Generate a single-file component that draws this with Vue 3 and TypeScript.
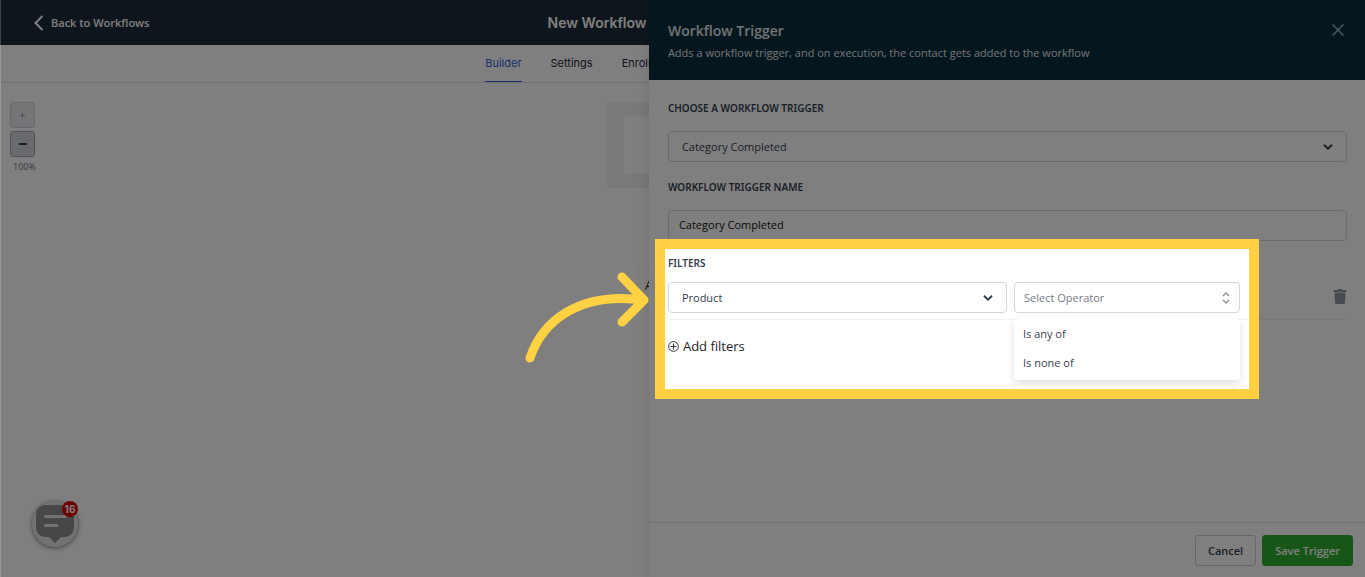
<script setup lang="ts">
import { ref } from 'vue'

const trigger = ref('Category Completed')
const triggerName = ref('Category Completed')
const filterField = ref('Product')
const operator = ref('')
const operators: string[] = ['Is any of', 'Is none of']
const tabs: string[] = ['Builder', 'Settings', 'Enrollment']
const activeTab = ref('Builder')
</script>

<template>
  <div class="page">
    <header class="topbar">
      <a class="back" href="#">
        <svg width="10" height="16" viewBox="0 0 10 16" fill="none" stroke="currentColor" stroke-width="2" aria-hidden="true">
          <path d="M8.5 1 1.5 8l7 7" />
        </svg>
        Back to Workflows
      </a>
      <h1 class="title">New Workflow</h1>
    </header>

    <nav class="tabs">
      <a v-for="tab in tabs" :key="tab" href="#" class="tab" :class="{ active: tab === activeTab }" @click.prevent="activeTab = tab">{{ tab }}</a>
    </nav>

    <main class="canvas">
      <div class="zoom">
        <button class="zoom-btn faded" type="button" aria-label="Zoom in" disabled>
          <svg width="7" height="7" viewBox="0 0 7 7" stroke="currentColor" fill="none"><path d="M3.5 1v5M1 3.5h5" /></svg>
        </button>
        <button class="zoom-btn" type="button" aria-label="Zoom out">
          <svg width="8" height="4" viewBox="0 0 8 4" stroke="currentColor" stroke-width="2" fill="none"><path d="M0 2h8" /></svg>
        </button>
        <span class="zoom-level">100%</span>
      </div>
      <div class="flow">
        <div class="trigger-node"><div class="trigger-inner"></div></div>
        <div class="step-node">Add</div>
      </div>
      <button class="chat" type="button" aria-label="Open chat">
        <svg width="38" height="38" viewBox="0 0 38 38" aria-hidden="true">
          <path d="M9 0h20a9 9 0 0 1 9 9v14a9 9 0 0 1-9 9h-4l-6 6-6-6H9a9 9 0 0 1-9-9V9a9 9 0 0 1 9-9z" fill="#8f8f8f" />
          <path d="M9.500 11.500h20M9.500 20.500h11.500" stroke="#e6e6e6" stroke-width="3" stroke-linecap="round" />
        </svg>
        <span class="badge">16</span>
      </button>
    </main>

    <aside class="drawer">
      <header class="drawer-head">
        <div>
          <h2>Workflow Trigger</h2>
          <p>Adds a workflow trigger, and on execution, the contact gets added to the workflow</p>
        </div>
        <button class="close" type="button" aria-label="Close">
          <svg width="12" height="12" viewBox="0 0 12 12" stroke="currentColor" stroke-width="1.500" fill="none"><path d="M.5.5l11 11M11.500.5l-11 11" /></svg>
        </button>
      </header>

      <div class="drawer-body">
        <div class="field">
          <label for="trigger">CHOOSE A WORKFLOW TRIGGER</label>
          <div class="control">
            <select id="trigger" v-model="trigger"><option>Category Completed</option></select>
            <svg class="chevron" width="10" height="6" viewBox="0 0 10 6" fill="none" stroke="currentColor" stroke-width="2"><path d="M1 .7 5 4.600 9 .7" /></svg>
          </div>
        </div>

        <div class="field">
          <label for="trigger-name">WORKFLOW TRIGGER NAME</label>
          <input id="trigger-name" v-model="triggerName" type="text" />
        </div>

        <section class="filters">
          <div class="filter-card">
            <label for="filter-field">FILTERS</label>
            <div class="filter-row">
              <div class="control wide">
                <select id="filter-field" v-model="filterField"><option>Product</option></select>
                <svg class="chevron" width="10" height="6" viewBox="0 0 10 6" fill="none" stroke="currentColor" stroke-width="2"><path d="M1 .7 5 4.600 9 .7" /></svg>
              </div>
              <div class="control narrow">
                <select id="operator" v-model="operator" class="placeholder" aria-label="Operator">
                  <option value="">Select Operator</option>
                  <option v-for="name in operators" :key="name">{{ name }}</option>
                </select>
                <svg class="updown" width="8" height="12" viewBox="0 0 8 12" fill="none" stroke="currentColor" stroke-width="1.300"><path d="M1 4l3-3 3 3M1 8l3 3 3-3" /></svg>
                <ul class="menu">
                  <li v-for="name in operators" :key="name">
                    <button type="button" @click="operator = name">{{ name }}</button>
                  </li>
                </ul>
              </div>
              <div class="row-end">
                <button class="trash" type="button" aria-label="Remove filter">
                  <svg width="14" height="15" viewBox="0 0 14 15" fill="currentColor"><path d="M.5 1h4l.7-1h3.600l.7 1h4v2H.5zM1.500 3.500h11l-.6 10a1.500 1.500 0 0 1-1.500 1.500H3.600a1.500 1.500 0 0 1-1.500-1.500z" /></svg>
                </button>
              </div>
            </div>
          </div>
          <button class="add" type="button">
            <svg width="11" height="11" viewBox="0 0 11 11" fill="none" stroke="currentColor" stroke-width=".9"><circle cx="5.500" cy="5.500" r="4.900" /><path d="M5.500 2.500v6M2.500 5.500h6" /></svg>
            Add filters
          </button>
          <div class="highlight">
            <svg class="arrow" width="132" height="100" viewBox="0 0 132 100" fill="none" stroke="#ffd143" stroke-width="9" stroke-linecap="round" stroke-linejoin="round" aria-hidden="true">
              <path d="M10 89C22 53 58 22 124 31M102 8l22 23-22 22" />
            </svg>
          </div>
        </section>
      </div>

      <footer class="drawer-foot">
        <button class="btn" type="button">Cancel</button>
        <button class="btn primary" type="button">Save Trigger</button>
      </footer>
    </aside>
  </div>
</template>

<style>
body {
  margin: 0;
}
</style>

<style scoped>
* {
  box-sizing: border-box;
}
.page {
  position: relative;
  display: flex;
  flex-direction: column;
  min-height: 100vh;
  overflow: hidden;
  border-left: 1px solid rgba(255, 255, 255, 0.2);
  background: linear-gradient(#0f151d 45px, #808080 45px);
  font-family: 'Open Sans', 'Noto Sans', sans-serif;
  font-size: 11px;
  color: #374151;
}
button,
input,
select {
  font: inherit;
  color: inherit;
}
button {
  padding: 0;
  border: 0;
  background: none;
}
a {
  color: inherit;
  text-decoration: none;
}
h1,
h2,
p,
ul {
  margin: 0;
  padding: 0;
  list-style: none;
}
svg {
  display: block;
}
.topbar {
  display: grid;
  grid-template-columns: 40% 1fr;
  align-items: center;
  height: 45px;
  background: #1f2b3a;
  color: #fff;
}
.back {
  display: flex;
  align-items: center;
  gap: 7px;
  padding-left: 33px;
  font-weight: 600;
}
.title {
  padding-left: 1px;
  font: 600 14px/18px Inter, sans-serif;
}
.tabs {
  display: flex;
  gap: 29px;
  height: 38px;
  padding-left: 35.5%;
  border-bottom: 1px solid #dfe2e6;
  background: #fff;
  color: #1f2937;
  font: 11px/36px Inter, sans-serif;
}
.tab.active {
  color: #2f5be0;
  border-bottom: 1px solid #2f5be0;
}
.canvas {
  position: relative;
  flex: 1;
  padding: 19px 11px 19px 9px;
  background: #fff;
}
.zoom {
  position: absolute;
  display: flex;
  flex-direction: column;
  gap: 3px;
}
.zoom-btn {
  display: flex;
  align-items: center;
  justify-content: center;
  width: 25px;
  height: 26px;
  border: 1px solid #9ca3af;
  border-radius: 3px;
  background: #d4d7de;
}
.faded {
  opacity: 0.5;
}
.zoom-level {
  padding-left: 3px;
  font-size: 9px;
  line-height: 14px;
  color: #6b7280;
}
.flow {
  display: flex;
  flex-direction: column;
  align-items: center;
  gap: 79px;
}
.trigger-node {
  padding: 14px 17px;
  border-radius: 4px;
  background: #f1f2f3;
}
.trigger-inner {
  width: 118px;
  height: 58px;
  border: 1px dashed #f3f4f6;
  border-radius: 4px;
  background: #fff;
}
.step-node {
  width: 90px;
  padding: 0 7px;
  border: 1px dashed #eceef0;
  font-size: 12px;
  line-height: 36px;
  color: #111;
}
.chat {
  position: absolute;
  left: 31px;
  bottom: 30px;
  width: 46px;
  height: 46px;
  padding: 4px;
  border-radius: 50%;
  background: #e4e4e4;
  box-shadow: 0 1px 5px rgba(0, 0, 0, 0.5);
}
.badge {
  position: absolute;
  top: 0;
  right: 0;
  width: 16px;
  height: 16px;
  border-radius: 50%;
  background: #d80000;
  color: #fff;
  font: 700 10px/16px Inter, sans-serif;
}
.drawer {
  position: absolute;
  top: 0;
  right: 0;
  bottom: 0;
  z-index: 2;
  display: flex;
  flex-direction: column;
  width: 52.5%;
  background: #fff;
  box-shadow: 0 0 14px rgba(0, 0, 0, 0.12);
}
.drawer-head {
  display: flex;
  justify-content: space-between;
  align-items: flex-start;
  height: 80px;
  padding: 21px 21px 0 19px;
  background: #0a2e3d;
  color: #e5e7eb;
}
.drawer-head h2 {
  font-size: 14px;
  font-weight: 600;
  line-height: 20px;
}
.drawer-head p {
  margin-top: 4px;
  line-height: 16px;
}
.close {
  padding-top: 3px;
  color: #a3b0cc;
}
.drawer-body {
  flex: 1;
  padding: 20px 18px 20px 19px;
}
.field {
  margin-bottom: 17px;
}
label {
  display: block;
  margin-bottom: 15px;
  font-family: 'Noto Sans', 'Open Sans', sans-serif;
  font-size: 10px;
  font-weight: 600;
  line-height: 16px;
}
.control {
  position: relative;
}
select,
input {
  display: block;
  width: 100%;
  height: 31px;
  padding: 0 13px;
  border: 1px solid #d3d6df;
  border-radius: 4px;
  background: #fff;
  appearance: none;
}
input {
  padding: 0 10px 2px;
  color: #111;
}
.chevron,
.updown {
  position: absolute;
  top: 13px;
  right: 14px;
  pointer-events: none;
}
.updown {
  top: 10px;
  right: 10px;
  color: #8b919c;
}
.placeholder {
  padding: 0 9px;
  color: #747b87;
}
.filters {
  position: relative;
  margin-top: -3px;
}
.filter-card {
  padding-bottom: 6px;
  border-bottom: 1px solid #f0f1f3;
  border-radius: 4px;
}
.filter-card label {
  margin-bottom: 11px;
}
.filter-row {
  display: flex;
  gap: 7px;
}
.wide {
  flex: 3;
}
.narrow {
  flex: 2;
}
.row-end {
  display: flex;
  align-items: flex-start;
  justify-content: flex-end;
  width: 100px;
  padding-top: 7px;
}
.trash {
  color: #8e94a3;
}
.menu {
  position: absolute;
  top: 37px;
  left: 0;
  right: 0;
  padding-bottom: 3px;
  border-radius: 4px;
  background: #fff;
  box-shadow: 0 4px 8px rgba(0, 0, 0, 0.12);
}
.menu button {
  display: block;
  width: 100%;
  padding: 0 9px;
  line-height: 29px;
  text-align: left;
}
.add {
  display: flex;
  align-items: center;
  gap: 4px;
  margin-top: 16px;
  font-size: 13px;
  line-height: 20px;
  color: #1f2329;
}
.highlight {
  position: absolute;
  top: -16px;
  left: -13px;
  width: 89%;
  height: 160px;
  border: 10px solid #ffd143;
  box-shadow: 0 0 0 200vmax rgba(0, 0, 0, 0.5);
  pointer-events: none;
}
.arrow {
  position: absolute;
  top: 20px;
  right: calc(100% + 13px);
}
.drawer-foot {
  display: flex;
  justify-content: flex-end;
  gap: 6px;
  padding: 12px 12px 11px;
  border-top: 1px solid #dfe2e6;
}
.btn {
  height: 31px;
  padding: 0 12px;
  border: 1px solid #c9ccd3;
  border-radius: 3px;
  font-weight: 600;
}
.primary {
  border-color: #30ac30;
  background: #30ac30;
  color: #fff;
}
</style>
